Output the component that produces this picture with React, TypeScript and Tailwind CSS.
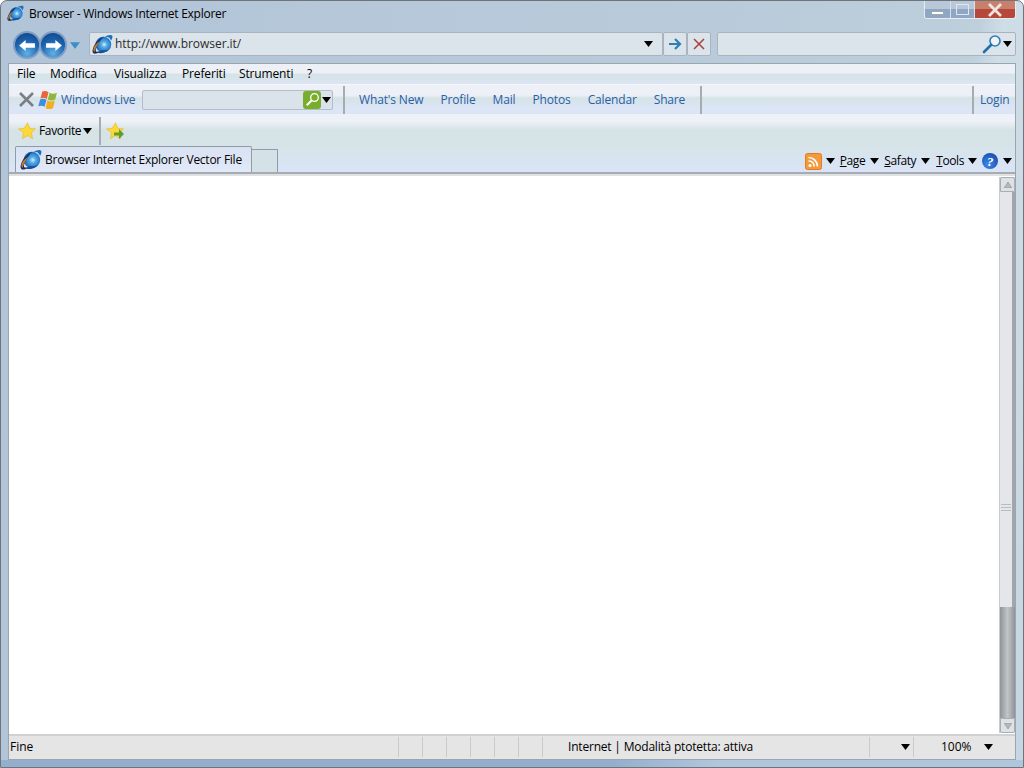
const IeLogo = ({ size = 20 }: { size?: number }) => (
  <svg width={size} height={size} viewBox="0 0 24 24" className="shrink-0">
    <defs>
      <radialGradient id="ieBlue" cx="0.55" cy="0.5" r="0.6">
        <stop offset="0" stopColor="#d7f0fb" />
        <stop offset="0.3" stopColor="#55aee6" />
        <stop offset="1" stopColor="#0a56b0" />
      </radialGradient>
    </defs>
    <circle cx="13" cy="12" r="9" fill="url(#ieBlue)" />
    <path d="M14 3.300c2.800-1.500 7.500-3.200 9-1.500 1 1.300 0 4-1.200 5.700-.6-1.500-1.400-2.800-2.600-3.600-1.600-1-3.400-1-5.200-.6z" fill="#1a6fc0" />
    <path d="M13.500 2.800C8 5 3 10.500 1 17c-1.200 3.700.2 6.200 3.800 5.300 2.200-.6 4.400-2 6.200-3.400-2.400 1-5.600 2.200-6.500.7-.9-1.700 1.200-6.300 3.300-9.600 1.500-2.400 3.500-5.300 5.700-7.200z" fill="#16315f" />
    <path d="M2.500 14.500c-1 2.400-1.500 5 .2 6.200.8-2.400 1.700-4.800 3-7.200 1-1.800 2-3.500 3.300-5.100C6.300 10 4 12 2.500 14.500z" fill="#c9781e" />
    <path d="M6 21.500c4 .9 9.500.4 13.500-3.800-3 .9-6 1.200-8.500.9-1.800 1-3.400 2.100-5 2.900z" fill="#1c4f96" />
  </svg>
);

const Tri = ({ className = "" }: { className?: string }) => (
  <svg width="9" height="6" viewBox="0 0 9 6" className={`shrink-0 ${className}`}>
    <path d="M0 0h9L4.500 6z" fill="#000" />
  </svg>
);

const NavButton = ({ dir }: { dir: "left" | "right" }) => (
  <div className="flex h-[28px] w-[28px] items-center justify-center rounded-full border-[2px] border-[#7f9fc4] bg-[radial-gradient(circle_at_50%_85%,#5fb0e8_0%,#1b62ae_55%,#10407f_100%)]">
    <svg width="19" height="13" viewBox="0 0 20 14">
      {dir === "left" ? (
        <path d="M1 7l7-6v3.500h10v5H8V13z" fill="#fff" />
      ) : (
        <path d="M19 7l-7-6v3.500H2v5h10V13z" fill="#fff" />
      )}
    </svg>
  </div>
);

const Star = () => (
  <svg width="18" height="18" viewBox="0 0 18 18" className="shrink-0">
    <path d="M9.500 .8l2.400 5.500 5.600.6-4.200 3.800 1.300 6-5.100-3.100-5.200 3.100 1.300-6L.5 6.900l5.700-.6z" fill="#fbd93a" stroke="#e9b52a" strokeWidth=".6" />
  </svg>
);

const menuItems = [
  { label: "File", w: "w-[33px]" },
  { label: "Modifica", w: "w-[64px]" },
  { label: "Visualizza", w: "w-[68px]" },
  { label: "Preferiti", w: "w-[57px]" },
  { label: "Strumenti", w: "w-[68px]" },
];

const liveLinks = ["What's New", "Profile", "Mail", "Photos", "Calendar", "Share"];

export default function App() {
  return (
    <div className="flex h-[768px] w-[1024px] flex-col overflow-hidden rounded-t-[7px] border border-[#6f7478] bg-[linear-gradient(100deg,#b1c4d8_0%,#bccddb_82%,#bfd0dd_85%,#cfdde7_87%,#c6d6e2_100%)] font-['Open_Sans','Noto_Sans',sans-serif] text-[12px] text-black">
      {/* title bar */}
      <div className="flex h-[30px] shrink-0 items-start justify-between pl-[6px] pr-[7px]">
        <div className="flex items-center gap-[5px] pt-[4px]">
          <IeLogo size={17} />
          <span className="text-[12px] leading-[17px] tracking-[-0.25px]">Browser - Windows Internet Explorer</span>
        </div>
        <div className="flex h-[18px] w-[92px] overflow-hidden rounded-b-[3px] border border-t-0 border-[#e4ebf1]">
          <div className="flex w-[25px] items-end justify-center bg-[linear-gradient(#b8c8d8_50%,#8fa6c4_50%)] pb-[3px]">
            <div className="h-[4px] w-[13px] border border-[#9aa] bg-white" />
          </div>
          <div className="flex w-[25px] items-center justify-center border-x border-[#d6e0e8] bg-[linear-gradient(#b8c8d8_50%,#8fa6c4_50%)]">
            <div className="h-[11px] w-[13px] border border-[#dfe7ee]" />
          </div>
          <div className="flex flex-1 items-center justify-center bg-[linear-gradient(#c8806c_45%,#b5483a_45%)]">
            <svg width="16" height="14" viewBox="0 0 16 14">
              <path d="M2 1l12 12M14 1L2 13" stroke="#f1e4df" strokeWidth="2.800" />
            </svg>
          </div>
        </div>
      </div>

      {/* address row */}
      <div className="flex h-[32px] shrink-0 items-start pl-[12px] pr-[7px]">
        <div className="flex items-center">
          <NavButton dir="left" />
          <div className="ml-[-2px]">
            <NavButton dir="right" />
          </div>
          <svg width="10" height="7" viewBox="0 0 11 7" className="ml-[3px] mt-[1px]">
            <path d="M0 0h11L5.500 7z" fill="#3a8fc8" />
          </svg>
        </div>
        <div className="ml-[9px] mt-[1px] flex h-[24px] w-[574px] items-center rounded-[2px] border border-[#a9b4be] bg-[#dbe3eb] pl-[2px] pr-[9px]">
          <IeLogo size={21} />
          <span className="ml-[2px] flex-1 tracking-[-0.05px] text-[#2c2c2c]">http://www.browser.it/</span>
          <Tri />
        </div>
        <div className="mt-[1px] flex h-[24px] w-[24px] items-center justify-center rounded-[2px] border border-[#a9b4be] bg-[#dbe3eb]">
          <svg width="14" height="12" viewBox="0 0 14 12">
            <path d="M1 6h10M7 1l5 5-5 5" fill="none" stroke="#2f7fb5" strokeWidth="2.200" />
          </svg>
        </div>
        <div className="mt-[1px] flex h-[24px] w-[24px] items-center justify-center rounded-[2px] border border-[#a9b4be] bg-[#dbe3eb]">
          <svg width="12" height="12" viewBox="0 0 12 12">
            <path d="M1 1l10 10M11 1L1 11" stroke="#a8413c" strokeWidth="1.500" />
          </svg>
        </div>
        <div className="ml-[6px] mt-[1px] flex h-[24px] w-[299px] items-center justify-end gap-[1px] rounded-[2px] border border-[#a9b4be] bg-[#dbe3eb] pr-[3px]">
          <svg width="20" height="20" viewBox="0 0 20 20">
            <circle cx="13" cy="7" r="5" fill="#eef4f8" stroke="#2f7fb5" strokeWidth="1.600" />
            <path d="M9 11l-7 7" stroke="#1f6fa8" strokeWidth="2.600" strokeLinecap="round" />
          </svg>
          <Tri />
        </div>
      </div>

      {/* main panel */}
      <div className="ml-[7px] mr-[7px] flex min-h-0 flex-1 flex-col border border-[#9aa5ae] bg-white">
        {/* menu bar */}
        <div className="flex h-[20px] shrink-0 items-center bg-[linear-gradient(#edf1f7_0%,#edf1f7_45%,#d5e3e5_50%,#dbe5f4_100%)] pl-[8px] tracking-[-0.15px]">
          {menuItems.map((m) => (
            <span key={m.label} className={m.w}>
              {m.label}
            </span>
          ))}
          <span>?</span>
        </div>

        {/* windows live bar */}
        <div className="flex h-[30px] shrink-0 items-center border-t border-[#f5f7fa] bg-[linear-gradient(#edf1f7_0%,#edf1f7_35%,#d5e3e5_45%,#dbe5f6_75%)] text-[#2a5ea6]">
          <svg width="17" height="17" viewBox="0 0 17 17" className="ml-[9px]">
            <path d="M2 2l13 13M15 2L2 15" stroke="#7c7f82" strokeWidth="2.600" />
          </svg>
          <svg width="21" height="20" viewBox="0 0 20 19" className="ml-[2px]">
            <path d="M5 1.500c2-1 4-.8 6 .5L9.300 8.500C7.300 7.200 5.300 7 3.300 8z" fill="#e8663a" />
            <path d="M12 2.500c2 1.300 4.500 1.200 7 0l-1.700 6.500c-2.300 1.200-4.700 1.200-7 0z" fill="#8cb83c" />
            <path d="M3 9c2-1 4-.8 6 .5L7.200 16c-2-1.300-4-1.500-6-.5z" fill="#3f8ee0" />
            <path d="M10 10c2.300 1.200 4.700 1.200 7 0L15.300 17c-2.300 1.500-5 1.500-7.200 0z" fill="#f2b01e" />
          </svg>
          <span className="ml-[3px] w-[81px] tracking-[-0.15px]">Windows Live</span>
          <div className="flex h-[20px] w-[191px] items-center justify-end rounded-[2px] border border-[#b4bdc5] bg-[#dbe3ea] pr-[1px]">
            <div className="flex h-[18px] w-[18px] items-center justify-center rounded-[3px] bg-[#79ad2c]">
              <svg width="15" height="15" viewBox="0 0 15 15">
                <circle cx="9.500" cy="5.500" r="3.800" fill="none" stroke="#fff" strokeWidth="1.300" />
                <path d="M6.500 8.500L1.800 13.200" stroke="#fff" strokeWidth="2" />
              </svg>
            </div>
            <Tri className="ml-[1px]" />
          </div>
          <div className="ml-[10px] h-[28px] w-[2px] bg-[#a5adb3]" />
          <div className="flex w-[355px] items-center gap-[17px] pl-[14px] tracking-[-0.15px]">
            {liveLinks.map((l) => (
              <span key={l}>{l}</span>
            ))}
          </div>
          <div className="h-[28px] w-[2px] bg-[#a5adb3]" />
          <div className="flex-1" />
          <div className="h-[28px] w-[2px] bg-[#a5adb3]" />
          <span className="w-[41px] pl-[6px] tracking-[-0.2px]">Login</span>
        </div>

        {/* favorites + tabs */}
        <div className="flex h-[60px] shrink-0 flex-col border-b-[2px] border-[#a8acb0] bg-[linear-gradient(#eef2f8_0%,#eef2f8_12%,#d5e3e5_28%,#d6e4e8_55%,#dae4f8_100%)]">
          <div className="flex h-[32px] shrink-0 items-center pl-[9px] pt-[1px]">
            <Star />
            <span className="ml-[3px] tracking-[-0.35px]">Favorite</span>
            <Tri className="ml-[2px]" />
            <div className="ml-[7px] h-[28px] w-[2px] bg-[#a5adb3]" />
            <div className="relative ml-[5px]">
              <Star />
              <svg width="12" height="10" viewBox="0 0 12 10" className="absolute bottom-[1px] right-[-1px]">
                <path d="M1 3.500h5V0l5 5-5 5V6.500H1z" fill="#5e9e2e" />
              </svg>
            </div>
          </div>
          <div className="flex min-h-0 flex-1 items-end justify-between pl-[6px] pr-[3px]">
            <div className="flex items-end">
              <div className="flex h-[26px] w-[237px] items-center gap-[3px] rounded-t-[2px] border border-b-0 border-[#8f9ba6] bg-[linear-gradient(#d9e2f2,#e2e9f8)] pl-[4px] tracking-[-0.25px]">
                <IeLogo size={22} />
                <span>Browser Internet Explorer Vector File</span>
              </div>
              <div className="h-[23px] w-[26px] border border-b-0 border-l-0 border-[#8f9ba6] bg-[#d4e1e6]" />
            </div>
            <div className="flex items-center pb-[2px] tracking-[-0.4px]">
              <svg width="17" height="17" viewBox="0 0 17 17">
                <rect x=".5" y=".5" width="16" height="16" rx="2" fill="#f39a3c" stroke="#e57a20" />
                <circle cx="5" cy="12.500" r="1.500" fill="#fff" />
                <path d="M3.500 8a5 5 0 0 1 5.500 5.500M3.500 4.500a9 9 0 0 1 9 9" fill="none" stroke="#fff" strokeWidth="1.600" />
              </svg>
              <Tri className="ml-[4px]" />
              <span className="ml-[5px]"><span className="underline">P</span>age</span>
              <Tri className="ml-[5px]" />
              <span className="ml-[5px]"><span className="underline">S</span>afaty</span>
              <Tri className="ml-[5px]" />
              <span className="ml-[6px]"><span className="underline">T</span>ools</span>
              <Tri className="ml-[4px]" />
              <div className="ml-[5px] flex h-[16px] w-[16px] items-center justify-center rounded-full bg-[radial-gradient(circle_at_40%_70%,#3f8be8,#0e3d9e)] font-['Liberation_Serif',serif] text-[13px] font-bold italic leading-none text-white">
                ?
              </div>
              <Tri className="ml-[5px]" />
            </div>
          </div>
        </div>

        {/* page + scrollbar */}
        <div className="flex min-h-0 flex-1 border-t-[2px] border-[#dfe2e5]">
          <div className="flex-1 bg-white" />
          <div className="my-[1px] flex w-[16px] flex-col border-l border-[#c8cbce] bg-[#d9dcdf]">
            <div className="flex h-[15px] items-center justify-center rounded-t-[2px] border border-[#a9aeb3] bg-[#dfe2e5]">
              <svg width="8" height="6" viewBox="0 0 8 6">
                <path d="M0 6h8L4 0z" fill="#b4b8bc" stroke="#8e9296" strokeWidth=".6" />
              </svg>
            </div>
            <div className="flex h-[415px] flex-col border-r-[3px] border-[#a2a6aa] bg-[#e4e6e9] pt-[312px]">
              <div className="flex w-full flex-col gap-[2px] px-[1px]">
                <div className="h-[1px] bg-[#babdc0]" />
                <div className="h-[1px] bg-[#babdc0]" />
                <div className="h-[1px] bg-[#babdc0]" />
              </div>
            </div>
            <div className="flex-1 bg-[linear-gradient(90deg,#8f9397,#c2c5c8_50%,#8f9397)]" />
            <div className="flex h-[15px] items-center justify-center rounded-b-[2px] border border-[#a9aeb3] bg-[#dfe2e5]">
              <svg width="8" height="6" viewBox="0 0 8 6">
                <path d="M0 0h8L4 6z" fill="#b4b8bc" stroke="#8e9296" strokeWidth=".6" />
              </svg>
            </div>
          </div>
        </div>

        {/* status bar */}
        <div className="flex h-[25px] shrink-0 items-center border-t-[2px] border-[#cfd1d3] bg-[#e5e5e5] pb-[2px]">
          <span className="w-[389px] pl-[1px]">Fine</span>
          {[0, 1, 2, 3, 4, 5, 6].map((i) => (
            <div key={i} className="h-[20px] w-[24px] border-l border-[#c9cbcd]" />
          ))}
          <span className="w-[303px] pl-[2px] tracking-[-0.2px]">Internet | Modalità ptotetta: attiva</span>
          <div className="flex h-[20px] w-[45px] items-center justify-end border-x border-[#c9cbcd] pr-[3px]">
            <Tri />
          </div>
          <span className="ml-[27px] w-[43px]">100%</span>
          <Tri />
        </div>
      </div>
      <div className="h-[7px] shrink-0 bg-[linear-gradient(90deg,#94afce_0%,#94afce_60%,#b0c6dc_70%,#b0c6dc_100%)]" />
    </div>
  );
}
